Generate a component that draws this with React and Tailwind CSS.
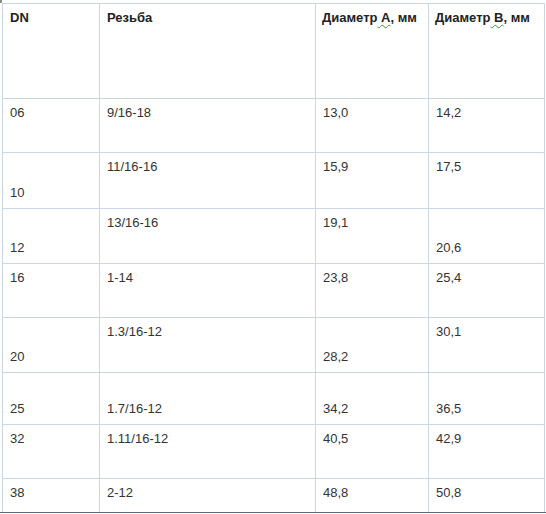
import React from 'react';

const rows = [
  { h: 'h-[54px]', cells: [['06', 't'], ['9/16-18', 't'], ['13,0', 't'], ['14,2', 't']] },
  { h: 'h-[56px]', cells: [['10', 'b'], ['11/16-16', 't'], ['15,9', 't'], ['17,5', 't']] },
  { h: 'h-[55px]', cells: [['12', 'b'], ['13/16-16', 't'], ['19,1', 't'], ['20,6', 'b']] },
  { h: 'h-[54px]', cells: [['16', 't'], ['1-14', 't'], ['23,8', 't'], ['25,4', 't']] },
  { h: 'h-[55px]', cells: [['20', 'b'], ['1.3/16-12', 't'], ['28,2', 'b'], ['30,1', 't']] },
  { h: 'h-[52px]', cells: [['25', 'b'], ['1.7/16-12', 'b'], ['34,2', 'b'], ['36,5', 'b']] },
  { h: 'h-[54px]', cells: [['32', 't'], ['1.11/16-12', 't'], ['40,5', 't'], ['42,9', 't']] },
  { h: 'h-[33px]', cells: [['38', 't'], ['2-12', 't'], ['48,8', 't'], ['50,8', 't']], last: true },
];

const grid = 'grid grid-cols-[97px_216px_113px_116px]';

function Cell({ text, align, last }) {
  return (
    <div
      className={
        'flex flex-col border-r border-[#cad6e3] pl-[7px] ' +
        (last ? '' : 'border-b ') +
        (align === 'b' ? 'justify-end pb-[8px]' : 'justify-start pt-[6px]')
      }
    >
      <span className="leading-[15px]">{text}</span>
    </div>
  );
}

export default function App() {
  return (
    <div className="w-[546px] h-[514px] bg-white text-[13px] text-[#333] font-['Liberation_Sans',Arial,sans-serif]">
      <div className="h-[3px]">
        <div className="w-[2px] h-[3px] bg-[#8a8a8a]" />
      </div>
      <div className="ml-[2px] w-[543px] border-t border-l border-[#cad6e3]">
        {/* header */}
        <div className={grid + ' h-[95px] font-bold text-[#222]'}>
          <div className="border-r border-b border-[#cad6e3] pl-[7px] pt-[6px] leading-[15px]">DN</div>
          <div className="border-r border-b border-[#cad6e3] pl-[7px] pt-[6px] leading-[15px]">Резьба</div>
          <div className="border-r border-b border-[#cad6e3] pl-[6px] pt-[6px] leading-[15px] whitespace-pre">
            Диаметр<span className="underline decoration-wavy decoration-[#3a9a3a] decoration-1 underline-offset-2"> А</span>, мм
          </div>
          <div className="border-r border-b border-[#cad6e3] pl-[6px] pt-[6px] leading-[15px] whitespace-pre">
            Диаметр<span className="underline decoration-wavy decoration-[#3a9a3a] decoration-1 underline-offset-2"> В</span>, мм
          </div>
        </div>

        {rows.map((r, i) => (
          <div key={i} className={grid + ' ' + r.h}>
            {r.cells.map(([t, a], j) => (
              <Cell key={j} text={t} align={a} last={r.last} />
            ))}
          </div>
        ))}
      </div>
      <div className="border-t border-[#5b6a80]" />
    </div>
  );
}
